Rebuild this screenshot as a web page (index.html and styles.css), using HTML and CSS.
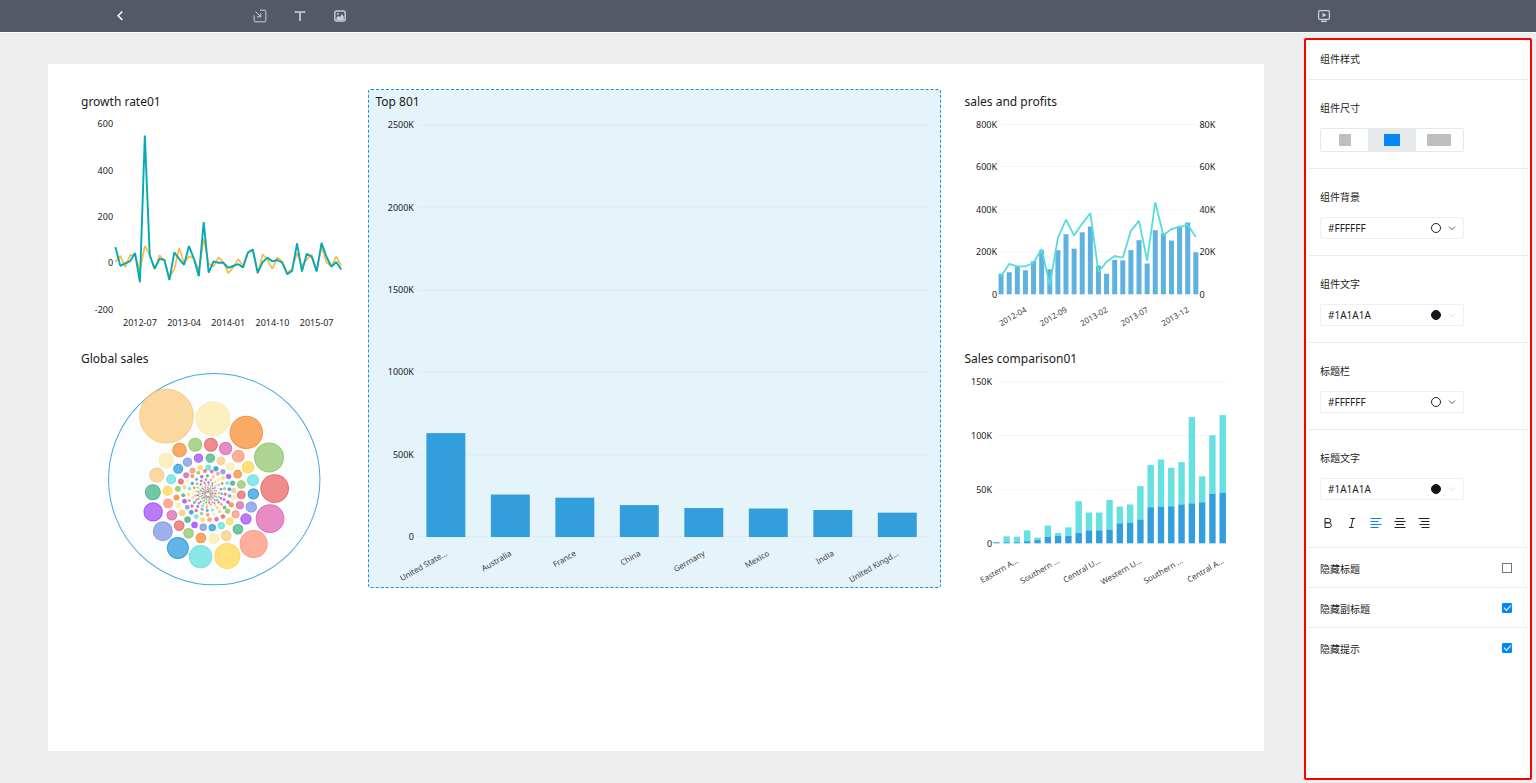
FILE: index.html
```html
<!DOCTYPE html>
<html lang="zh-CN">
<head>
<meta charset="utf-8">
<title>Dashboard editor</title>
<meta name="viewport" content="width=device-width, initial-scale=1">
<link rel="stylesheet" href="styles.css">
</head>
<body>
<header class="toolbar">
  <button class="tool" type="button" aria-label="Back">
    <svg viewBox="0 0 16 16"><path d="M10.300 3.500 6.100 7.700l4.200 4.200" stroke="#fff" stroke-width="1.500"/></svg>
  </button>
  <div class="tool-group">
    <button class="tool" type="button" aria-label="Insert component">
      <svg viewBox="0 0 16 16"><path d="M8 2.200h4.800a1 1 0 0 1 1 1v9.600a1 1 0 0 1-1 1H3.200a1 1 0 0 1-1-1V7.500M3.500 3.500l5 5M8.800 5v3.800H5"/></svg>
    </button>
    <button class="tool" type="button" aria-label="Insert text">
      <svg viewBox="0 0 16 16"><path d="M3.500 5V4h9v1M8 4v9" stroke-width="1.700"/></svg>
    </button>
    <button class="tool" type="button" aria-label="Insert image">
      <svg viewBox="0 0 16 16"><rect x="2.800" y="3" width="10.400" height="10" rx="2" stroke-width="1.400"/><path d="M4.500 12V9.500l2-1.500 1.500 1 2-3 1.800 3v3z" fill="#c3d0dd" stroke="none"/><circle cx="5.800" cy="6" r="1" fill="#c3d0dd" stroke="none"/></svg>
    </button>
  </div>
  <button class="tool tool-preview" type="button" aria-label="Preview">
    <svg viewBox="0 0 16 16"><rect x="2.600" y="2.700" width="10.800" height="8.600" rx="1" stroke-width="1.300"/><path d="M5 13.300h6" stroke-width="1.500"/><path d="M6.500 4.800v4.400l4-2.200z" fill="#c3d0dd" stroke="none"/></svg>
  </button>
</header>

<div class="editor">
  <main class="workspace">
    <div class="board">
      <section class="card">
        <h2>growth rate01</h2>
        <svg id="growth" viewBox="0 0 276 215" role="img" aria-label="growth rate01"></svg>
      </section>
      <section class="card card-main">
        <h2>Top 801</h2>
        <svg id="top" viewBox="0 0 572 472" role="img" aria-label="Top 801"></svg>
      </section>
      <section class="card">
        <h2>sales and profits</h2>
        <svg id="profits" viewBox="0 0 276 215" role="img" aria-label="sales and profits"></svg>
      </section>
      <section class="card">
        <h2>Global sales</h2>
        <svg id="global" viewBox="0 0 276 215" role="img" aria-label="Global sales"></svg>
      </section>
      <section class="card">
        <h2>Sales comparison01</h2>
        <svg id="comparison" viewBox="0 0 276 215" role="img" aria-label="Sales comparison01"></svg>
      </section>
    </div>
  </main>

  <aside class="panel">
    <h1 class="panel-title">组件样式</h1>

    <div class="section">
      <span class="label" id="size-label">组件尺寸</span>
      <div class="sizes" role="group" aria-labelledby="size-label">
        <button type="button" aria-label="Small"><i class="block block-s"></i></button>
        <button type="button" aria-label="Medium" aria-pressed="true"><i class="block block-m"></i></button>
        <button type="button" aria-label="Large"><i class="block block-l"></i></button>
      </div>
    </div>

    <div class="section">
      <label class="label" for="bg">组件背景</label>
      <div class="color">
        <select id="bg"><option>#FFFFFF</option></select>
        <span class="marks"><i class="dot"></i><svg viewBox="0 0 8 8"><path d="M1 2.500 4 5.500 7 2.500"/></svg></span>
      </div>
    </div>

    <div class="section">
      <label class="label" for="fg">组件文字</label>
      <div class="color">
        <select id="fg"><option>#1A1A1A</option></select>
        <span class="marks marks-dark"><i class="dot"></i><svg viewBox="0 0 8 8"><path d="M1 2.500 4 5.500 7 2.500"/></svg></span>
      </div>
    </div>

    <div class="section">
      <label class="label" for="title-bg">标题栏</label>
      <div class="color">
        <select id="title-bg"><option>#FFFFFF</option></select>
        <span class="marks"><i class="dot"></i><svg viewBox="0 0 8 8"><path d="M1 2.500 4 5.500 7 2.500"/></svg></span>
      </div>
    </div>

    <div class="section">
      <label class="label" for="title-fg">标题文字</label>
      <div class="color">
        <select id="title-fg"><option>#1A1A1A</option></select>
        <span class="marks marks-dark"><i class="dot"></i><svg viewBox="0 0 8 8"><path d="M1 2.500 4 5.500 7 2.500"/></svg></span>
      </div>
      <div class="formats">
        <button type="button" aria-label="Bold"><svg viewBox="0 0 16 16"><path d="M5 3.500h3.500a2.100 2.100 0 0 1 0 4.300H5zM5 7.800h4a2.350 2.350 0 0 1 0 4.700H5z"/></svg></button>
        <button type="button" aria-label="Italic"><svg viewBox="0 0 16 16"><path d="M6.500 3.500H11M5 12.500h4.500M9 3.500l-2 9"/></svg></button>
        <button type="button" aria-label="Align left" aria-pressed="true"><svg viewBox="0 0 16 16"><path d="M2.500 3.500h11M2.500 6.500h8M2.500 9.500h11M2.500 12.500h8"/></svg></button>
        <button type="button" aria-label="Align center"><svg viewBox="0 0 16 16"><path d="M4 3.500h8M2.500 6.500h11M4 9.500h8M2.500 12.500h11"/></svg></button>
        <button type="button" aria-label="Align right"><svg viewBox="0 0 16 16"><path d="M2.500 3.500h11M5 6.500h8.500M3.500 9.500h10M5.500 12.500h8"/></svg></button>
      </div>
    </div>

    <label class="toggle">隐藏标题<input type="checkbox"></label>
    <label class="toggle">隐藏副标题<input type="checkbox" checked></label>
    <label class="toggle">隐藏提示<input type="checkbox" checked></label>
  </aside>
</div>
<script src="charts.js"></script>
</body>
</html>
```
FILE: styles.css
```css
* {
  box-sizing: border-box;
}

body {
  margin: 0;
  min-height: 100vh;
  display: flex;
  flex-direction: column;
  background: #eee;
  color: #222;
  font-family: "Noto Sans", "Noto Sans CJK SC", sans-serif;
  font-size: 10px;
}

button {
  padding: 0;
  border: 0;
  background: none;
  cursor: pointer;
}

.toolbar {
  display: flex;
  align-items: center;
  height: 33px;
  padding: 0 204px 0 112px;
  background: #545967;
  border-bottom: 1px solid #fff;
}

.tool {
  width: 16px;
  height: 16px;
}

.tool svg {
  display: block;
  fill: none;
  stroke: #c3d0dd;
  stroke-width: 1;
}

.tool-group {
  display: flex;
  gap: 24px;
  margin-left: 124px;
}

.tool-preview {
  margin-left: auto;
}

.editor {
  flex: 1;
  display: flex;
}

.workspace {
  flex: 1;
  min-width: 0;
  display: flex;
  padding: 31px 40px 32px 48px;
}

.board {
  flex: 1;
  display: grid;
  grid-template-columns: repeat(4, 1fr);
  grid-auto-rows: minmax(241px, auto);
  align-content: start;
  gap: 16px;
  padding: 25px 29px 32px 25px;
  background: #fff;
}

.card {
  display: flex;
  flex-direction: column;
  min-width: 0;
  border: 1px solid transparent;
}

.card-main {
  grid-column: 2 / span 2;
  grid-row: 1 / span 2;
  background: #e5f3fb;
  border: 1px dashed #1a91d9;
  border-radius: 3px;
}

.card h2 {
  margin: 0;
  padding-left: 7px;
  font-size: 12px;
  line-height: 24px;
  font-weight: 400;
  color: #1a1a1a;
}

.card > svg {
  display: block;
  width: 100%;
  flex: 1;
  overflow: visible;
}

.card text {
  font-size: 9px;
  fill: #222;
  dominant-baseline: central;
}

.card text.slanted {
  font-size: 8px;
  fill: #444;
}

.grid {
  stroke: #f6f6f7;
}

.card-main .grid {
  stroke: #dcebf4;
}

.line {
  fill: none;
  stroke-width: 2;
  stroke-linejoin: bevel;
}

.panel {
  width: 228px;
  margin: 5px 4px 3px 0;
  padding: 0 2px;
  border: 2px solid #f00;
  border-radius: 2px;
  background: #fff;
}

.panel-title {
  margin: 0;
  padding-left: 12px;
  font-size: 10px;
  line-height: 39px;
  font-weight: 400;
}

.section {
  padding: 20px 12px 16px;
  border-top: 1px solid #e8eaec;
}

.label {
  display: block;
  margin-bottom: 12px;
  line-height: 16px;
}

.sizes {
  display: flex;
  width: 144px;
  height: 24px;
  border: 1px solid #e6e9ec;
  border-radius: 2px;
}

.sizes button {
  flex: 1;
  display: flex;
  align-items: center;
  justify-content: center;
}

.sizes button[aria-pressed="true"] {
  background: #e6e9ec;
}

.block {
  height: 12px;
  background: #bfbfbf;
}

.block-s {
  width: 12px;
}

.block-m {
  width: 16px;
  background: #0487fb;
}

.block-l {
  width: 24px;
}

.color {
  position: relative;
  width: 144px;
}

.color select {
  display: block;
  width: 100%;
  height: 22px;
  padding: 0 7px;
  appearance: none;
  border: 1px solid #ebf0f4;
  border-radius: 2px;
  background: #fff;
  color: #222;
  font: inherit;
}

.marks {
  position: absolute;
  top: 6px;
  right: 8px;
  display: flex;
  align-items: center;
  gap: 7px;
  pointer-events: none;
}

.dot {
  width: 10px;
  height: 10px;
  border: 1px solid #222;
  border-radius: 50%;
}

.marks svg {
  width: 8px;
  height: 8px;
  fill: none;
  stroke: #555;
}

.marks-dark .dot {
  background: #16141a;
  border-color: #16141a;
}

.marks-dark svg {
  stroke: #ddd;
}

.formats {
  display: flex;
  gap: 8px;
  margin-top: 15px;
}

.formats button {
  width: 16px;
  height: 16px;
}

.formats svg {
  display: block;
  fill: none;
  stroke: #222;
}

.formats button[aria-pressed="true"] svg {
  stroke: #0487fb;
}

.toggle {
  display: flex;
  align-items: center;
  justify-content: space-between;
  height: 40px;
  padding: 1px 16px 0 12px;
  border-top: 1px solid #e8eaec;
}

.toggle input {
  width: 10px;
  height: 10px;
  margin: 0;
  appearance: none;
  border: 1px solid #777;
  background: #fff;
}

.toggle input:checked {
  border-color: #0487fb;
  border-radius: 1px;
  background: #0487fb;
}

.toggle input:checked::after {
  content: "";
  display: block;
  width: 6px;
  height: 3px;
  margin: 1px;
  border: solid #fff;
  border-width: 0 0 1px 1px;
  transform: rotate(-45deg);
}
```
FILE: charts.js
```js
const NS = 'http://www.w3.org/2000/svg';

function add(svg, tag, attrs, text) {
  const el = document.createElementNS(NS, tag);
  for (const key in attrs) el.setAttribute(key, attrs[key]);
  if (text !== undefined) el.textContent = text;
  svg.appendChild(el);
  return el;
}

function yAxis(svg, ticks, y, x, anchor) {
  ticks.forEach(([value, label]) =>
    add(svg, 'text', { x, y: y(value), 'text-anchor': anchor }, label));
}

function gridLines(svg, values, y, x1, x2) {
  values.forEach(v => {
    const at = Math.floor(y(v)) + 0.5;
    add(svg, 'line', { class: 'grid', x1, x2, y1: at, y2: at });
  });
}

function slanted(svg, x, y, label) {
  add(svg, 'text', {
    class: 'slanted', x, y, 'text-anchor': 'end',
    transform: `rotate(-30 ${x} ${y})`
  }, label);
}

function bar(svg, cx, width, top, bottom, fill) {
  add(svg, 'rect', { x: cx - width / 2, y: top, width, height: bottom - top, fill });
}

function line(svg, values, x, y, stroke, width) {
  const points = values.map((v, i) => `${x(i)},${y(v)}`).join(' ');
  add(svg, 'polyline', { class: 'line', points, stroke, style: `stroke-width:${width}` });
}

function drawGrowth() {
  const svg = document.getElementById('growth');
  const x = i => 41.3 + i * 4.9;
  const y = v => 148.5 - v * 0.231;
  const target = [3, 30, -19, 33, 32, -33, 73, 35, -29, 32, 10, -62, -29, 63, 0, 27, 20, -33, 104,
    -4, -16, 23, 3, -45, -19, 16, -13, 46, 53, -48, 37, 12, -26, 23, 6, -45, -26, 42, -13, 14, 35,
    -33, 68, 3, -16, 27, -12];
  const actual = [68, -13, -3, 7, 42, -84, 550, 32, -25, 17, 12, -75, 45, 17, -9, 72, 17, -58, 176,
    -43, 6, 0, 0, -22, -14, -6, -20, 43, 58, -43, 3, 22, 6, 12, 0, -49, -35, 84, -38, 39, 26,
    -38, 86, 26, -17, 3, -29];
  line(svg, target, x, y, '#fbb83d', 1.6);
  line(svg, actual, x, y, '#04a9b8', 1.9);
  yAxis(svg, [600, 400, 200, 0, -200].map(v => [v, v]), y, 39, 'end');
  ['2012-07', '2013-04', '2014-01', '2014-10', '2015-07'].forEach((label, i) =>
    add(svg, 'text', { x: x(5 + i * 9), y: 208, 'text-anchor': 'middle' }, label));
}

function drawTop() {
  const svg = document.getElementById('top');
  const y = v => 422.5 - v * 0.165;
  const ticks = [2500, 2000, 1500, 1000, 500, 0];
  gridLines(svg, ticks, y, 49, 563);
  yAxis(svg, ticks.map(v => [v, v ? v + 'K' : '0']), y, 45, 'end');
  [['United State...', 628], ['Australia', 255], ['France', 236], ['China', 191],
   ['Germany', 173], ['Mexico', 170], ['India', 161], ['United Kingd...', 145]
  ].forEach(([label, value], i) => {
    const cx = 77 + i * 64.6;
    bar(svg, cx, 39, y(value), 423, '#329fdc');
    slanted(svg, cx, 438, label);
  });
}

function drawProfits() {
  const svg = document.getElementById('profits');
  const x = i => 43 + i * 8.1;
  const y = v => 180 - v * 0.212;
  const ticks = [800, 600, 400, 200, 0];
  gridLines(svg, ticks.slice(0, 4), y, 43, 239);
  [97, 104, 130, 113, 156, 208, 118, 208, 283, 215, 292, 319, 135, 97, 162, 160, 208, 255, 145,
   302, 288, 253, 322, 338, 198].forEach((v, i) => bar(svg, x(i), 5, y(v), 180, '#5eb2e1'));
  line(svg, [85, 143, 132, 132, 148, 214, 42, 266, 352, 277, 333, 382, 105, 153, 180, 173, 299,
    346, 159, 434, 278, 307, 318, 327, 270], x, y, '#56dcdc', 1.8);
  yAxis(svg, ticks.map(v => [v, v ? v + 'K' : '0']), y, 39, 'end');
  yAxis(svg, ticks.map(v => [v, v ? v / 10 + 'K' : '0']), y, 241, 'start');
  ['2012-04', '2012-09', '2013-02', '2013-07', '2013-12'].forEach((label, i) =>
    slanted(svg, x(3 + i * 5), 194, label));
}

function drawComparison() {
  const svg = document.getElementById('comparison');
  const x = i => 38.3 + i * 10.27;
  const y = v => 172 - v * 1.077;
  const ticks = [150, 100, 50, 0];
  const base = [1, 1, 1, 2, 3, 6, 7, 7, 9.5, 12, 12, 12.7, 18.5, 19, 22, 33.4, 34, 34.3, 36, 37,
    38, 46, 46.7];
  const total = [1, 6.5, 6.2, 12, 5.3, 16.4, 9.6, 14.8, 39, 28.5, 28.5, 40.2, 34, 36, 53, 72.7,
    77.6, 70, 75.2, 117, 62, 100.2, 118.8];
  gridLines(svg, ticks, y, 38, 268);
  total.forEach((v, i) => {
    bar(svg, x(i), 6.4, y(v), y(base[i]), '#66e0e1');
    bar(svg, x(i), 6.4, y(base[i]), 172, '#329fdc');
  });
  yAxis(svg, ticks.map(v => [v, v ? v + 'K' : '0']), y, 34, 'end');
  ['Eastern A...', 'Southern ...', 'Central U...', 'Western U...', 'Southern ...', 'Central A...']
    .forEach((label, i) => slanted(svg, x(2 + i * 4), 188, label));
}

function drawGlobal() {
  const svg = document.getElementById('global');
  const palette = ['#fbc776', '#fceaa5', '#f88725', '#8bc362', '#e95c5c', '#de5bae', '#ff8d72',
    '#ffd348', '#5bdedb', '#2195d8', '#7390e4', '#9b45f8', '#3aaf7f'];
  /* x, y, radius of each region, largest first, in thirds of a unit */
  const bubbles = [
    [214,153,82],[353,161,52],[453,202,50],[521,277,45],[538,370,43],[524,460,43],[475,536,42],
    [396,572,39],[316,574,35],[248,548,33],[203,498,30],[174,440,29],[173,381,24],[185,330,23],
    [213,286,23],[253,255,22],[300,239,21],[347,239,21],[391,250,20],[429,273,19],[458,306,19],
    [473,345,18],[474,386,17],[468,425,17],[452,461,17],[428,492,16],[393,511,16],[356,520,16],
    [317,518,16],[280,504,16],[252,481,16],[230,450,16],[219,415,15],[217,377,15],[228,342,15],
    [249,311,15],[277,291,14],[310,279,14],[345,279,14],[377,287,13],[405,304,13],[427,327,13],
    [438,358,13],[438,389,13],[434,420,12],[421,447,12],[403,468,11],[378,481,11],[351,487,11],
    [324,486,11],[298,479,10],[277,463,10],[261,443,10],[249,420,9],[244,397,9],[248,371,9],
    [257,349,9],[273,330,9],[292,316,9],[315,308,8],[339,307,9],[362,311,8],[383,320,8],
    [400,334,8],[412,354,8],[415,376,8],[414,398,8],[408,419,8],[397,438,8],[383,454,7],
    [364,462,7],[343,463,7],[322,463,7],[303,454,7],[288,441,7],[276,426,7],[268,408,7],
    [264,390,6]
  ];
  /* the smallest regions wind inwards round the centre */
  let angle = Math.PI;
  let distance = 74;
  while (distance > 6) {
    angle += 0.2856 + (74 - distance) * 0.0016;
    distance *= 0.9885;
    bubbles.push([338 + distance * Math.cos(angle), 387 + distance * Math.sin(angle),
      1 + distance * 0.07]);
  }
  add(svg, 'circle', { cx: 140, cy: 108, r: 105.5, fill: '#fcfdff', stroke: '#45a9e0' });
  bubbles.forEach(([cx, cy, r], i) => {
    const color = palette[i % palette.length];
    const edge = r > 10 ? 1 : 0.4;
    add(svg, 'circle', {
      cx: cx / 3 + 21, cy: cy / 3 - 6, r: r / 3 - edge / 2, fill: color, stroke: color,
      'fill-opacity': r > 10 ? 0.7 : 0.8, 'stroke-opacity': 0.8, 'stroke-width': edge
    });
  });
}

drawGrowth();
drawTop();
drawProfits();
drawComparison();
drawGlobal();
```
